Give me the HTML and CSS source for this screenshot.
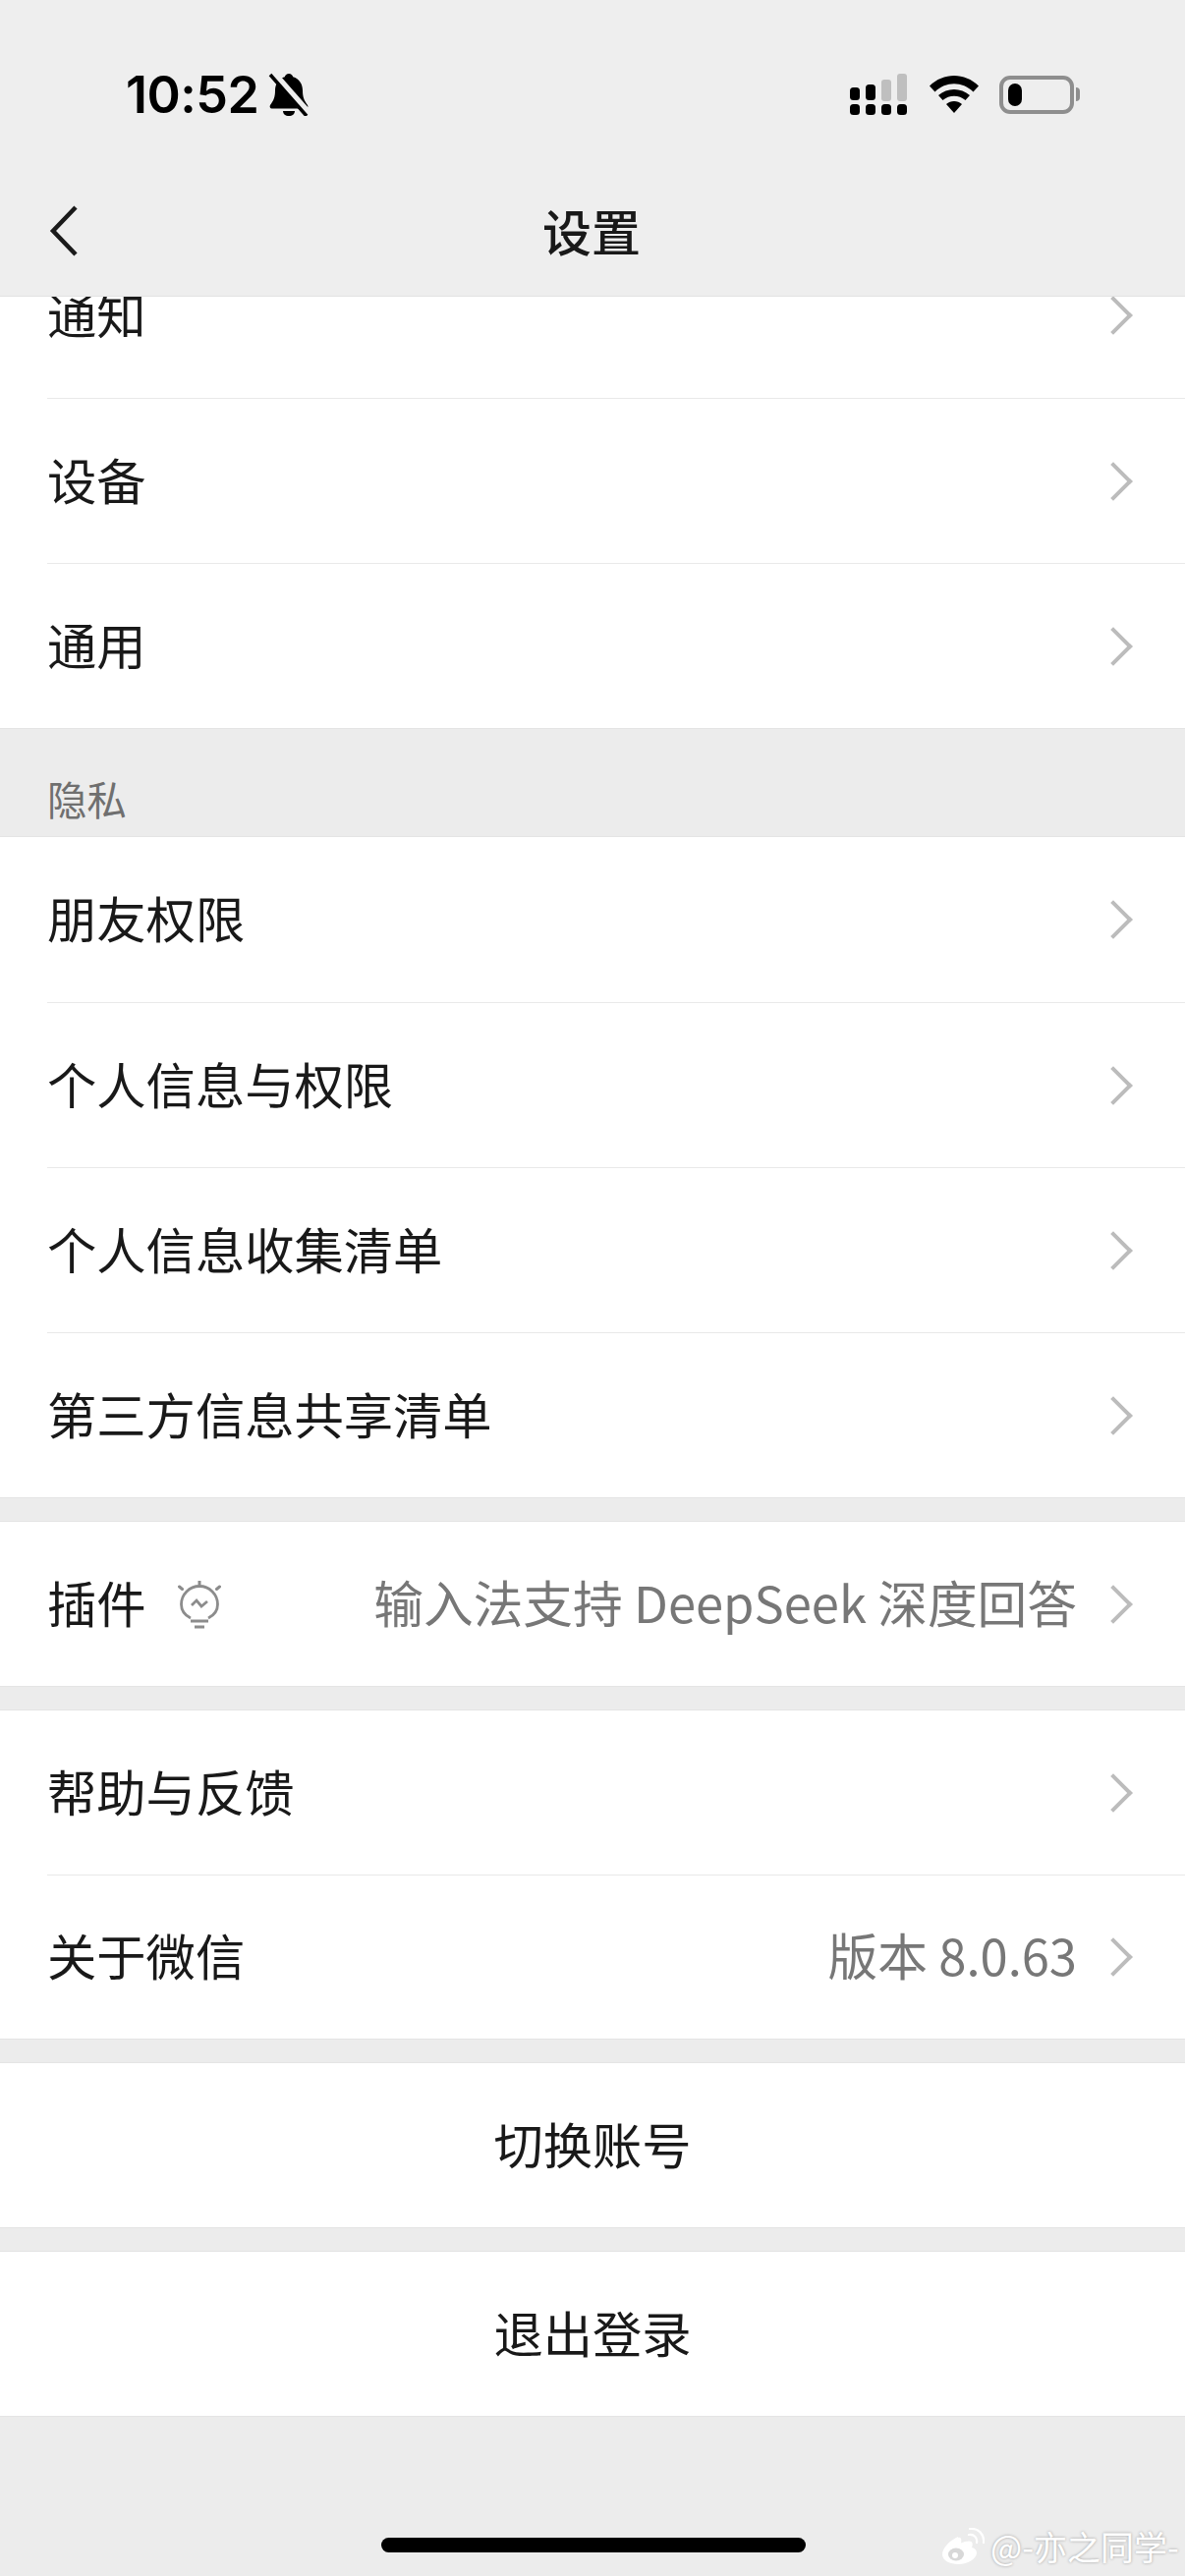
FILE: index.html
```html
<!DOCTYPE html>
<html lang="zh">
  <head>
    <meta charset="utf-8">
    <title>设置</title>
    <link rel="stylesheet" href="styles.css">
  </head>
  <body>
    <div class="phone">
      <div class="top-bar">
        <div class="status-bar">
          <div class="status-left">
            <span class="time">10:52</span>
            <svg class="bell" viewBox="0 0 42 44">
              <path d="M21 1c2.200 0 3.800 1.400 4.200 3.200C31.500 6 35 11.500 35 18c0 7 1.500 10 5 15 1 1.500 0 3.500-1.500 3.500h-35C2 36.500 1 34.500 2 33c3.500-5 5-8 5-15 0-6.500 3.500-12 9.800-13.800C17.200 2.400 18.800 1 21 1z" fill="#000"/>
              <path d="M15 39h12c0 3-2.500 5-6 5s-6-2-6-5z" fill="#000"/>
              <path d="M5 1l36 41" stroke="#eee" stroke-width="8"/>
              <path d="M2 2l37 42" stroke="#000" stroke-width="3.500"/>
            </svg>
          </div>
          <div class="status-right">
            <svg class="signal" viewBox="0 0 58 42">
              <rect x="0" y="14" width="10" height="13" rx="3.500"/>
              <rect x="16" y="11" width="10" height="16" rx="3.500"/>
              <rect x="32" y="6" width="10" height="22" rx="3" fill="#bfbfbf"/>
              <rect x="48" y="0" width="10" height="28" rx="3" fill="#bfbfbf"/>
              <rect x="0" y="31" width="10" height="11" rx="3.500"/>
              <rect x="16" y="31" width="10" height="11" rx="3.500"/>
              <rect x="32" y="31" width="10" height="11" rx="3.500"/>
              <rect x="48" y="31" width="10" height="11" rx="3.500"/>
            </svg>
            <svg class="wifi" viewBox="0 0 50 38">
              <path d="M25 38l-8-9c4.500-4 11.500-4 16 0z"/>
              <path d="M13.500 25l-4.500-5c9-8 23-8 32 0l-4.500 5c-6.500-5.800-16.500-5.800-23 0z"/>
              <path d="M5.500 16.500L0 10.500c14-14 36-14 50 0l-5.500 6C33.500 5.500 16.500 5.500 5.500 16.500z"/>
            </svg>
            <div class="battery">
              <div class="battery-body"><div class="battery-level"></div></div>
              <div class="battery-nub"></div>
            </div>
          </div>
        </div>
        <div class="nav-bar">
          <svg class="back" viewBox="0 0 30 52">
            <path d="M27 2L4 26l23 24" fill="none" stroke="#1a1a1a" stroke-width="4.500"/>
          </svg>
          <span class="nav-title">设置</span>
        </div>
      </div>

      <div class="content">
        <div class="group group-first group-tall">
          <div class="row"><span class="row-label">通知</span><span class="arrow"></span></div>
          <div class="row"><span class="row-label">设备</span><span class="arrow"></span></div>
          <div class="row"><span class="row-label">通用</span><span class="arrow"></span></div>
        </div>

        <div class="section-title">隐私</div>

        <div class="group group-tall">
          <div class="row"><span class="row-label">朋友权限</span><span class="arrow"></span></div>
          <div class="row"><span class="row-label">个人信息与权限</span><span class="arrow"></span></div>
          <div class="row"><span class="row-label">个人信息收集清单</span><span class="arrow"></span></div>
          <div class="row"><span class="row-label">第三方信息共享清单</span><span class="arrow"></span></div>
        </div>

        <div class="group">
          <div class="row">
            <span class="row-label">插件</span>
            <svg class="bulb" viewBox="0 0 44 52" fill="none" stroke="#8c8c8c" stroke-width="2.800">
              <path d="M13 38C7 35 3.500 30 3.500 24a18.500 18.500 0 0 1 37 0c0 6-3.500 11-9.500 14"/>
              <path d="M13 41h18M17 47h10" stroke-width="3"/>
              <path d="M14 25l5-5 5 6 6-5"/>
              <path d="M22 0v4M1.500 6l3 2.500M42.500 6l-3 2.500" stroke-linecap="round" stroke-width="3"/>
            </svg>
            <span class="row-value">输入法支持 DeepSeek 深度回答</span>
            <span class="arrow"></span>
          </div>
        </div>

        <div class="group">
          <div class="row"><span class="row-label">帮助与反馈</span><span class="arrow"></span></div>
          <div class="row">
            <span class="row-label">关于微信</span>
            <span class="row-value">版本 8.0.63</span>
            <span class="arrow"></span>
          </div>
        </div>

        <div class="group"><div class="row row-center">切换账号</div></div>
        <div class="group"><div class="row row-center">退出登录</div></div>
      </div>

      <div class="home-indicator"></div>

      <div class="watermark">
        <svg class="weibo" viewBox="0 0 44 38">
          <path d="M17 9C8 13 1 21 1 27c0 6.500 8 10 16 10 11 0 19-6 19-11.500 0-3.500-3-5-5-5.500 1-2.500 1-4.500 0-5.500-2-2-7-1-11 1 1-3.500 0-7-3-5.500z" fill="#fff"/>
          <ellipse cx="15" cy="27" rx="8" ry="6.500" fill="#d8d8d8"/>
          <circle cx="14" cy="28" r="3" fill="#fff"/>
          <path d="M28 7c5-1 9 3 8 8M29 1c9-1 15 6 14 14" fill="none" stroke="#fff" stroke-width="2.200" stroke-linecap="round"/>
        </svg>
        <span>@-亦之同学-</span>
      </div>
    </div>
  </body>
</html>
```

FILE: styles.css
```css
* {
  box-sizing: border-box;
}
html,
body {
  margin: 0;
  padding: 0;
}
.phone {
  position: relative;
  width: 1206px;
  height: 2622px;
  overflow: hidden;
  display: flex;
  flex-direction: column;
  background: #ececec;
  color: #191919;
  font-family: "Noto Sans CJK SC", "Noto Sans", sans-serif;
}
.top-bar {
  position: relative;
  z-index: 1;
  flex: none;
  height: 302px;
  background: #eeeeee;
  border-bottom: 1px solid #e2e2e2;
}
.status-bar {
  height: 176px;
  display: flex;
  justify-content: space-between;
  align-items: flex-start;
  padding: 72px 107px 0 128px;
}
.status-left {
  display: flex;
  align-items: center;
  gap: 10px;
  height: 48px;
}
.time {
  font-family: Inter, sans-serif;
  font-size: 52px;
  font-weight: 600;
  color: #000;
  letter-spacing: -0.5px;
}
.bell {
  width: 42px;
  height: 44px;
}
.status-right {
  display: flex;
  align-items: center;
  gap: 21px;
  height: 48px;
}
.signal {
  width: 58px;
  height: 42px;
  margin-right: 2px;
}
.wifi {
  width: 50px;
  height: 38px;
}
.battery {
  display: flex;
  align-items: center;
  gap: 2px;
}
.battery-body {
  width: 76px;
  height: 39px;
  border: 4px solid #8e8e8e;
  border-radius: 11px;
  padding: 4px 5px;
}
.battery-level {
  width: 14px;
  height: 100%;
  background: #000;
  border-radius: 7px;
}
.battery-nub {
  width: 4px;
  height: 14px;
  background: #8e8e8e;
  border-radius: 0 4px 4px 0;
}
.nav-bar {
  display: flex;
  justify-content: center;
  align-items: center;
  height: 116px;
  padding-right: 2px;
  position: relative;
}
.back {
  position: absolute;
  left: 50px;
  top: 33px;
  width: 30px;
  height: 52px;
}
.nav-title {
  font-size: 50px;
  font-weight: 500;
  line-height: 1;
}
.content {
  flex: none;
  display: flex;
  flex-direction: column;
  gap: 25px;
}
.group {
  background: #fff;
  box-shadow: 0 0 0 1px #e4e4e4;
}
.group-first {
  margin-top: -65px;
}
.row {
  display: flex;
  align-items: center;
  height: 167px;
  margin-left: 48px;
  padding-right: 59px;
  padding-bottom: 5px;
  font-size: 50.3px;
  border-top: 1px solid #e9e9e9;
}
.group-tall .row {
  height: 168px;
}
.row:first-child {
  border-top: none;
}
.row-label {
  line-height: 1;
}
.row-value {
  margin-left: auto;
  color: #777777;
  font-size: 50.7px;
  line-height: 1;
}
.row-value + .arrow {
  margin-left: 23px;
}
.arrow {
  flex: none;
  margin-left: auto;
  margin-top: 5px;
  width: 28px;
  height: 28px;
  border-top: 4px solid #bcbcbc;
  border-right: 4px solid #bcbcbc;
  transform: rotate(45deg);
}
.row-center {
  margin-left: 0;
  padding-right: 0;
  justify-content: center;
}
.bulb {
  margin-left: 32px;
  margin-top: 10px;
  width: 44px;
  height: 52px;
}
.section-title {
  margin-top: -25px;
  margin-bottom: -25px;
  height: 111px;
  padding: 44px 48px 0;
  font-size: 40.4px;
  line-height: 56px;
  color: #6f6f6f;
}
.home-indicator {
  position: absolute;
  left: 388px;
  top: 2583px;
  width: 432px;
  height: 15px;
  background: #000;
  border-radius: 8px;
}
.watermark {
  position: absolute;
  left: 958px;
  top: 2570px;
  display: flex;
  align-items: center;
  gap: 6px;
  color: #fff;
  font-size: 34px;
  line-height: 44px;
  white-space: nowrap;
  text-shadow: 0 0 3px rgba(0, 0, 0, 0.35);
}
.weibo {
  width: 44px;
  height: 38px;
}
```
